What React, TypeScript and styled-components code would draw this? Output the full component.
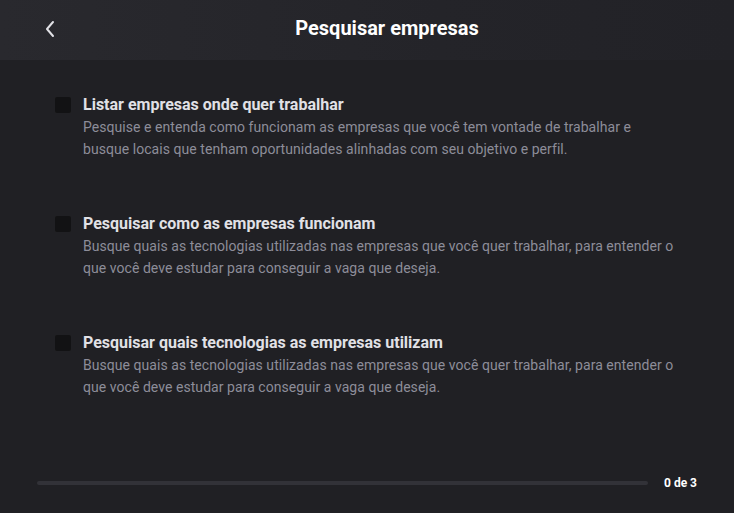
import React, { useState } from "react";
import styled, { createGlobalStyle } from "styled-components";

interface Task {
  id: number;
  title: string;
  description: string;
}

const tasks: Task[] = [
  {
    id: 1,
    title: "Listar empresas onde quer trabalhar",
    description:
      "Pesquise e entenda como funcionam as empresas que você tem vontade de trabalhar e busque locais que tenham oportunidades alinhadas com seu objetivo e perfil.",
  },
  {
    id: 2,
    title: "Pesquisar como as empresas funcionam",
    description:
      "Busque quais as tecnologias utilizadas nas empresas que você quer trabalhar, para entender o que você deve estudar para conseguir a vaga que deseja.",
  },
  {
    id: 3,
    title: "Pesquisar quais tecnologias as empresas utilizam",
    description:
      "Busque quais as tecnologias utilizadas nas empresas que você quer trabalhar, para entender o que você deve estudar para conseguir a vaga que deseja.",
  },
];

const App = () => {
  const [done, setDone] = useState<number[]>([]);

  const toggle = (id: number) => {
    setDone((prev) =>
      prev.includes(id) ? prev.filter((d) => d !== id) : [...prev, id]
    );
  };

  const progress = (done.length / tasks.length) * 100;

  return (
    <>
      <GlobalStyle />
      <Page>
        <Header>
          <BackButton aria-label="Voltar">
            <svg width="12" height="18" viewBox="0 0 12 18" fill="none">
              <path
                d="M9 2L3 9l6 7"
                stroke="#e1e1e6"
                strokeWidth="2"
                strokeLinecap="round"
                strokeLinejoin="round"
              />
            </svg>
          </BackButton>
          <Title>Pesquisar empresas</Title>
        </Header>

        <TaskList>
          {tasks.map((task) => (
            <TaskItem key={task.id}>
              <Checkbox
                $checked={done.includes(task.id)}
                onClick={() => toggle(task.id)}
              />
              <TaskText>
                <TaskTitle>{task.title}</TaskTitle>
                <TaskDescription>{task.description}</TaskDescription>
              </TaskText>
            </TaskItem>
          ))}
        </TaskList>

        <Footer>
          <ProgressTrack>
            <ProgressFill style={{ width: `${progress}%` }} />
          </ProgressTrack>
          <ProgressLabel>
            {done.length} de {tasks.length}
          </ProgressLabel>
        </Footer>
      </Page>
    </>
  );
};

export default App;

const GlobalStyle = createGlobalStyle`
  * {
    box-sizing: border-box;
  }

  body {
    margin: 0;
    background: #202024;
    font-family: Roboto, "Liberation Sans", sans-serif;
    -webkit-font-smoothing: antialiased;
  }
`;

const Page = styled.div`
  width: 734px;
  height: 513px;
  display: flex;
  flex-direction: column;
  background: #202024;
  overflow: hidden;
`;

const Header = styled.header`
  position: relative;
  height: 60px;
  flex-shrink: 0;
  display: flex;
  align-items: center;
  justify-content: center;
  padding-left: 40px;
  background: linear-gradient(90deg, #29292e 0%, #242429 60%, #222227 100%);
`;

const BackButton = styled.button`
  position: absolute;
  left: 40px;
  top: 19px;
  width: 20px;
  height: 20px;
  padding: 0;
  border: none;
  background: transparent;
  display: flex;
  align-items: center;
  justify-content: center;
  cursor: pointer;
`;

const Title = styled.h1`
  margin: 0;
  font-size: 20px;
  font-weight: 700;
  color: #ffffff;
  transform: translateY(-2px);
`;

const TaskList = styled.div`
  flex: 1;
  display: flex;
  flex-direction: column;
  gap: 54px;
  padding: 35px 40px 0 55px;
`;

const TaskItem = styled.div`
  display: flex;
  align-items: flex-start;
  gap: 12px;
`;

const Checkbox = styled.button<{ $checked: boolean }>`
  width: 16px;
  height: 16px;
  margin-top: 2px;
  padding: 0;
  flex-shrink: 0;
  border: none;
  border-radius: 2px;
  background: ${(p) => (p.$checked ? "#8257e5" : "#121214")};
  cursor: pointer;
`;

const TaskText = styled.div`
  display: flex;
  flex-direction: column;
  gap: 1px;
`;

const TaskTitle = styled.h2`
  margin: 0;
  font-size: 16px;
  line-height: 20px;
  font-weight: 700;
  color: #e1e1e6;
`;

const TaskDescription = styled.p`
  margin: 0;
  max-width: 596px;
  font-size: 14px;
  line-height: 22px;
  letter-spacing: 0.05px;
  color: #8d8d99;
`;

const Footer = styled.footer`
  height: 60px;
  flex-shrink: 0;
  display: flex;
  align-items: center;
  gap: 16px;
  padding: 0 37px;
`;

const ProgressTrack = styled.div`
  flex: 1;
  height: 4px;
  border-radius: 2px;
  background: #323238;
  overflow: hidden;
`;

const ProgressFill = styled.div`
  height: 100%;
  background: #8257e5;
`;

const ProgressLabel = styled.span`
  font-size: 12px;
  font-weight: 700;
  color: #ffffff;
`;
